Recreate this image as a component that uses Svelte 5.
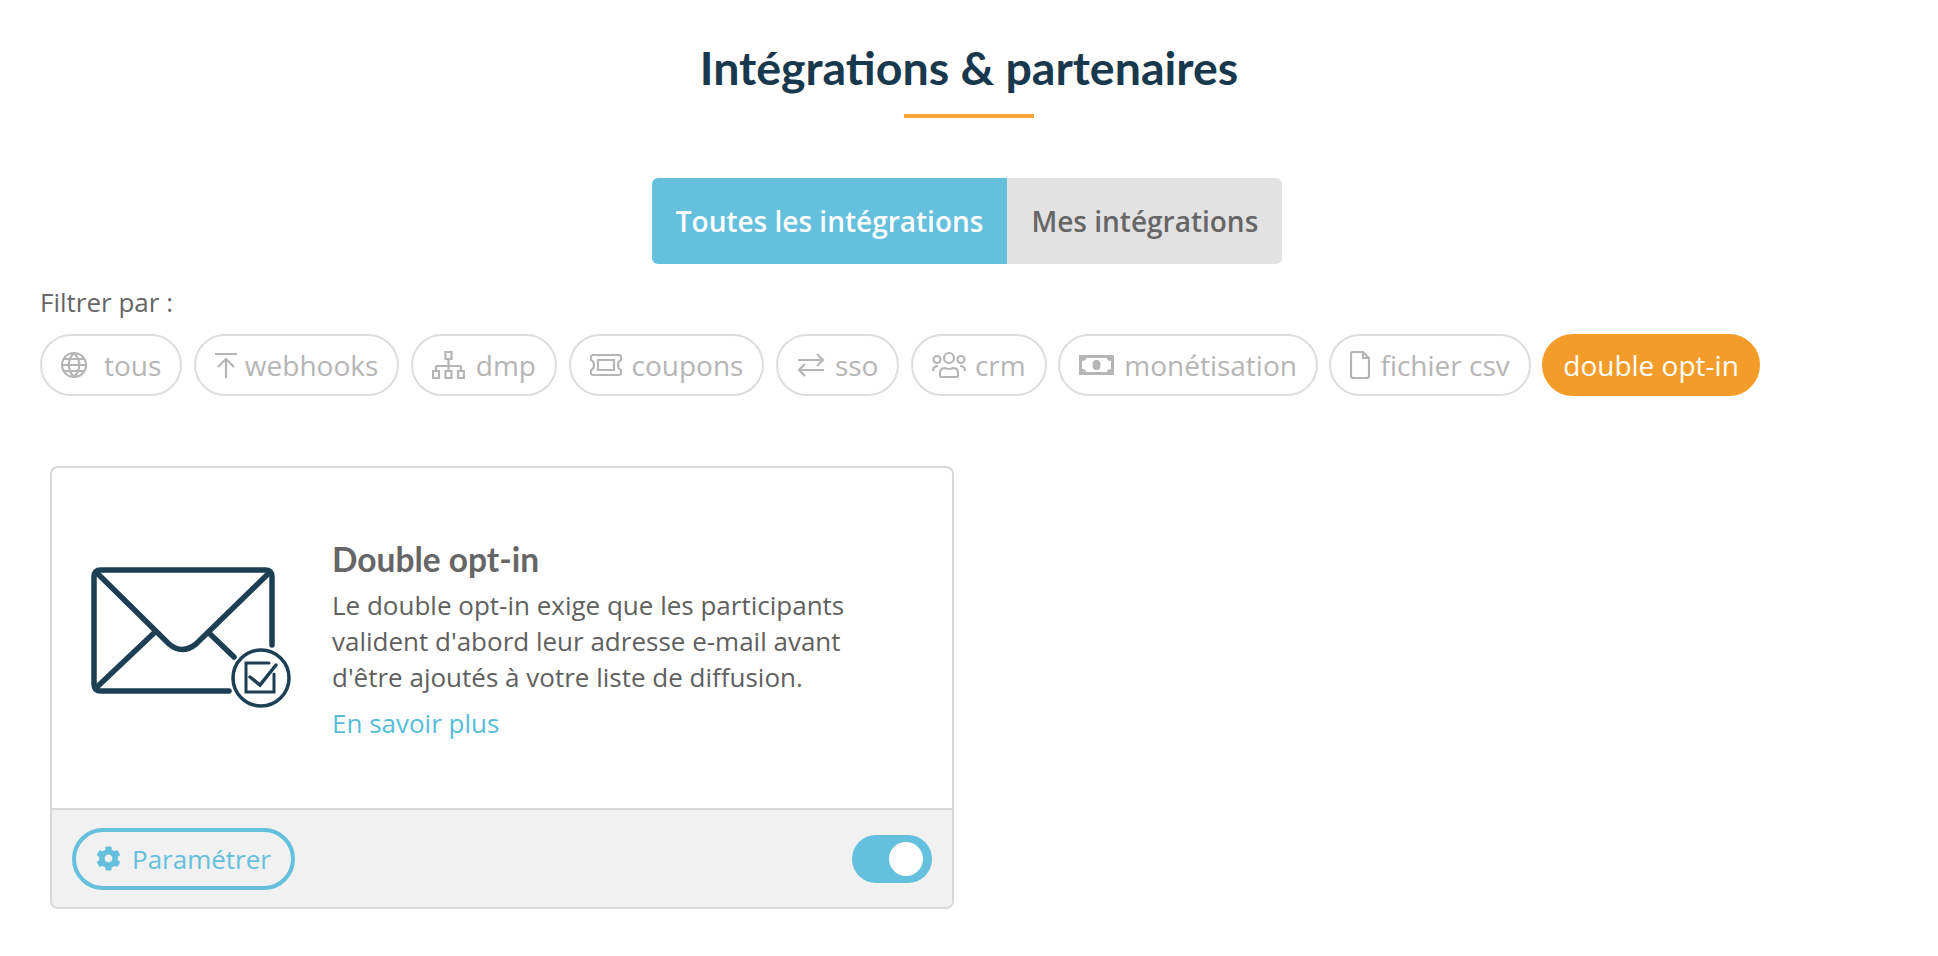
<script>
  // icons are drawn in pixels, w wide and 28 high
  const filters = [
    { label: 'tous', w: 26, gap: 17, d: 'M13 2a12 12 0 1 0 0 24a12 12 0 1 0 0-24M1 14h24M2.500 8h21M2.500 20h21M13 2c-7 7-7 17 0 24M13 2c7 7 7 17 0 24' },
    { label: 'webhooks', w: 22, gap: 8, d: 'M0 3h22M11 27V9M3 16l8-8l8 8' },
    { label: 'dmp', w: 33, gap: 11, d: 'M13.500 1h6v7h-6zM16.500 8v7M4 15h25M4 15v5M16.500 15v5M29 15v5M1 20h6v7H1zM13.500 20h6v7h-6zM26 20h6v7h-6z' },
    { label: 'coupons', w: 32, gap: 10, d: 'M3 4h26q2 0 2 2v3q-3 1-3 5t3 5v3q0 2-2 2H3q-2 0-2-2v-3q3-1 3-5t-3-5V6q0-2 2-2zM8 9h16v10H8z' },
    { label: 'sso', w: 28, gap: 10, d: 'M1 9h25M20 3l6 6l-6 6M27 19H2M8 13l-6 6l6 6' },
    { label: 'crm', w: 34, gap: 9, d: 'M17 2a5 5 0 1 0 0 10a5 5 0 1 0 0-10M5 5a3.500 3.500 0 1 0 0 7a3.500 3.500 0 1 0 0-7M29 5a3.500 3.500 0 1 0 0 7a3.500 3.500 0 1 0 0-7M8 25v-3c0-3 2-5 5-5c2 1 6 1 8 0c3 0 5 2 5 5v3a1 1 0 0 1-1 1H9a1 1 0 0 1-1-1zM1 20c0-3 2-5 5-5M33 20c0-3-2-5-5-5' },
    { label: 'monétisation', w: 35, gap: 10, money: true, d: 'M0 4h35v20H0zM7 7q0 3-4 3v8q4 0 4 3h21q0-3 4-3v-8q-4 0-4-3zM17.500 9c-3 0-4 2-4 5s1 5 4 5s4-2 4-5s-1-5-4-5z' },
    { label: 'fichier csv', w: 20, gap: 10, d: 'M3 1h10l6 6v18q0 2-2 2H3q-2 0-2-2V3q0-2 2-2zM13 1v6h6' }
  ];
</script>

<main class="page">
  <h1>Intégrations &amp; partenaires</h1>
  <div class="rule"></div>

  <div class="tabs">
    <button class="tab active">Toutes les intégrations</button>
    <button class="tab">Mes intégrations</button>
  </div>

  <p class="filter-label">Filtrer par :</p>
  <div class="pills">
    {#each filters as f}
      <button class="pill" style="gap: {f.gap}px">
        <svg class="ico" class:money={f.money} viewBox="0 0 {f.w} 28" width={f.w} height="28">
          <path fill-rule="evenodd" d={f.d} />
        </svg>
        <span>{f.label}</span>
      </button>
    {/each}
    <button class="pill on"><span>double opt-in</span></button>
  </div>

  <section class="card">
    <div class="body">
      <svg class="mail" viewBox="20 15 205 150" width="205" height="150">
        <g fill="none" stroke="#1c3f54" stroke-width="5.500" stroke-linecap="round">
          <path d="M160 141H32q-7 0-7-7V27q0-7 7-7h164q7 0 7 7v68" />
          <path d="M28 23l72 71q13 11 27 0l73-71M28 137l57-54M140 83l25 24" />
          <circle cx="192" cy="128" r="28" stroke-width="3.500" />
          <path stroke-width="3" d="M200 113h-23v29h28v-18" />
          <path stroke-width="3.500" d="M181 127l10 8l16-20" />
        </g>
      </svg>
      <div class="copy">
        <h2>Double opt-in</h2>
        <p>Le double opt-in exige que les participants valident d'abord leur adresse e-mail avant d'être ajoutés à votre liste de diffusion.</p>
        <a href="#more">En savoir plus</a>
      </div>
    </div>
    <footer class="foot">
      <button class="setup">
        <svg viewBox="0 0 512 512" width="25" height="25">
          <path fill="#64c0dc" d="M487.4 315.7l-42.6-24.6c4.3-23.2 4.3-47 0-70.2l42.6-24.6c4.9-2.8 7.1-8.6 5.5-14-11.1-35.6-30-67.8-54.7-94.6-3.8-4.1-10-5.1-14.8-2.3L380.8 110c-17.9-15.4-38.5-27.3-60.8-35.1V25.800c0-5.600-3.900-10.500-9.400-11.700-36.700-8.200-74.300-7.800-109.200 0-5.500 1.200-9.400 6.100-9.400 11.700V75c-22.200 7.900-42.800 19.800-60.800 35.100L88.700 85.500c-4.900-2.800-11-1.900-14.800 2.300-24.700 26.700-43.600 58.900-54.700 94.600-1.700 5.400.6 11.200 5.500 14L67.300 221c-4.300 23.200-4.300 47 0 70.200l-42.600 24.600c-4.900 2.800-7.100 8.600-5.500 14 11.100 35.600 30 67.800 54.700 94.600 3.800 4.100 10 5.100 14.800 2.300l42.600-24.600c17.900 15.400 38.500 27.300 60.800 35.100v49.200c0 5.600 3.900 10.500 9.400 11.700 36.700 8.200 74.300 7.800 109.200 0 5.500-1.200 9.400-6.100 9.400-11.700v-49.200c22.200-7.900 42.800-19.800 60.800-35.100l42.600 24.600c4.900 2.800 11 1.900 14.800-2.300 24.700-26.700 43.600-58.900 54.700-94.600 1.500-5.500-.7-11.300-5.600-14.100zM256 336c-44.100 0-80-35.900-80-80s35.900-80 80-80 80 35.900 80 80-35.900 80-80 80z" />
        </svg>
        Paramétrer
      </button>
      <span class="toggle"><span class="knob"></span></span>
    </footer>
  </section>
</main>

<style>
  :global(body) {
    background: #fff;
    font-family: "Open Sans", "Noto Sans", sans-serif;
  }

  .page {
    padding: 0 40px 46px;
    display: flex;
    flex-direction: column;
  }

  h1 {
    margin: 39px 0 0;
    font-family: Lato, sans-serif;
    font-size: 46.500px;
    line-height: 56px;
    font-weight: 700;
    color: #17384d;
    text-align: center;
  }

  .rule {
    align-self: center;
    width: 130px;
    height: 4px;
    margin-top: 19px;
    background: #f7a338;
  }

  .tabs {
    align-self: center;
    display: flex;
    margin-top: 60px;
    margin-right: 4px;
    border-radius: 6px;
    overflow: hidden;
  }

  .tab {
    height: 86px;
    padding: 0 24px;
    border: none;
    background: #e2e2e2;
    color: #666;
    font: 600 28px "Open Sans", sans-serif;
  }

  .tab.active {
    background: #64c0dc;
    color: #fff;
  }

  .filter-label {
    margin: 22px 0 0;
    font-size: 26px;
    line-height: 32px;
    color: #666;
  }

  .pills {
    display: flex;
    gap: 11.500px;
    margin-top: 16px;
  }

  .pill {
    display: flex;
    align-items: center;
    height: 62px;
    padding: 0 19px;
    border: 2px solid #ddd;
    border-radius: 31px;
    background: #fff;
    color: #b5b5b5;
    font: 400 28px "Open Sans", sans-serif;
  }

  .pill.on {
    border-color: #f49c29;
    background: #f49c29;
    color: #fff;
  }

  .ico {
    flex: none;
    fill: none;
    stroke: #b5b5b5;
    stroke-width: 2.200;
  }

  .ico.money {
    fill: #b5b5b5;
    stroke: none;
  }

  .card {
    width: 904px;
    margin: 70px 0 0 10px;
    border: 2px solid #d8d8d8;
    border-radius: 8px;
    overflow: hidden;
    box-sizing: border-box;
  }

  .body {
    display: flex;
    align-items: center;
    gap: 38px;
    height: 340px;
    padding: 0 37px;
    box-sizing: border-box;
  }

  .mail {
    flex: none;
    margin-top: 4px;
  }

  .copy {
    width: 530px;
    margin-top: 4px;
    color: #5f5f5f;
    font-size: 26px;
    line-height: 36px;
  }

  h2 {
    margin: 0 0 8px;
    font-family: Lato, sans-serif;
    font-size: 33.500px;
    line-height: 40px;
    font-weight: 700;
    color: #666;
  }

  p {
    margin: 0;
  }

  .copy p {
    margin-bottom: 10px;
  }

  .copy a {
    color: #56bcd8;
    text-decoration: none;
  }

  .foot {
    display: flex;
    align-items: center;
    justify-content: space-between;
    height: 97px;
    padding: 0 20px;
    border-top: 2px solid #d8d8d8;
    background: #f1f1f1;
  }

  .setup {
    display: flex;
    align-items: center;
    gap: 11px;
    height: 62px;
    padding: 0 20px;
    border: 4px solid #64c0dc;
    border-radius: 31px;
    background: transparent;
    color: #64c0dc;
    font: 400 26px "Open Sans", sans-serif;
  }

  .toggle {
    display: flex;
    justify-content: flex-end;
    align-items: center;
    width: 80px;
    height: 48px;
    padding-right: 9px;
    border-radius: 24px;
    background: #64c0dc;
    box-sizing: border-box;
  }

  .knob {
    width: 34px;
    height: 34px;
    border-radius: 50%;
    background: #fff;
  }
</style>
